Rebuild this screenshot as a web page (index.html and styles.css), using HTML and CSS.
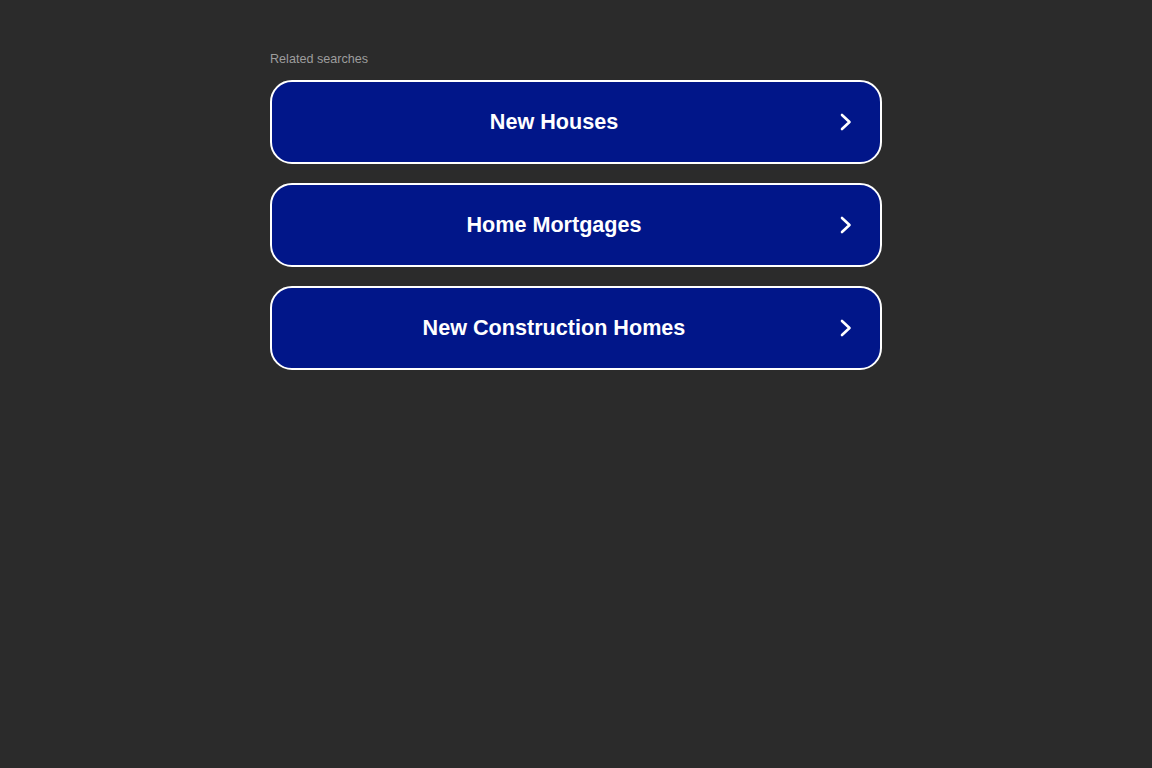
FILE: index.html
```html
<!DOCTYPE html>
<html>
<head>
<meta charset="utf-8">
<link rel="stylesheet" href="styles.css">
</head>
<body>
<div class="wrap">
  <div class="label">Related searches</div>
  <div class="list">
    <a class="item" href="#"><span class="text">New Houses</span><svg class="chev" viewBox="0 0 12 18" width="12" height="18"><path d="M2 2 L9.5 9 L2 16" fill="none" stroke="#fff" stroke-width="2.6" stroke-linecap="round" stroke-linejoin="round"/></svg></a>
    <a class="item" href="#"><span class="text">Home Mortgages</span><svg class="chev" viewBox="0 0 12 18" width="12" height="18"><path d="M2 2 L9.5 9 L2 16" fill="none" stroke="#fff" stroke-width="2.6" stroke-linecap="round" stroke-linejoin="round"/></svg></a>
    <a class="item" href="#"><span class="text">New Construction Homes</span><svg class="chev" viewBox="0 0 12 18" width="12" height="18"><path d="M2 2 L9.5 9 L2 16" fill="none" stroke="#fff" stroke-width="2.6" stroke-linecap="round" stroke-linejoin="round"/></svg></a>
  </div>
</div>
</body>
</html>
```

FILE: styles.css
```css
html, body {
  margin: 0;
  padding: 0;
  background: #2b2b2b;
  font-family: "Liberation Sans", Arial, sans-serif;
}
.wrap {
  width: 612px;
  margin: 0 auto;
  padding-top: 51px;
}
.label {
  color: #9d9d9d;
  font-size: 12.6px;
  line-height: 16px;
  margin-bottom: 13px;
}
.list {
  display: flex;
  flex-direction: column;
  gap: 19px;
}
.item {
  box-sizing: border-box;
  height: 84px;
  border: 2px solid #fff;
  border-radius: 22px;
  background: #011689;
  display: flex;
  align-items: center;
  padding: 0 28px 0 0;
  text-decoration: none;
}
.text {
  flex: 1;
  text-align: center;
  color: #fff;
  font-weight: bold;
  font-size: 21.6px;
}
.chev {
  flex: none;
  margin-left: 4px;
}
```
